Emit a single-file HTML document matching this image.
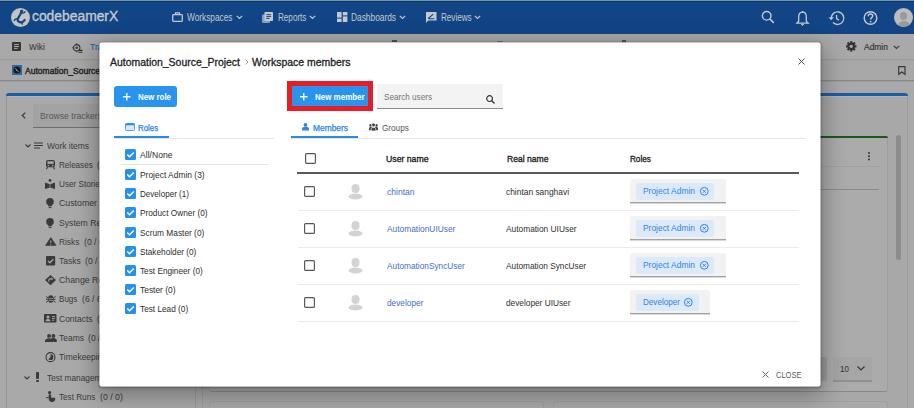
<!DOCTYPE html>
<html><head><meta charset="utf-8">
<style>
*{box-sizing:border-box;margin:0;padding:0}
html,body{width:914px;height:408px;overflow:hidden}
body{position:relative;font-family:"Liberation Sans",sans-serif;background:#a9a9a9;color:#2f2f2f}
.a{position:absolute}
.t{position:absolute;white-space:nowrap;line-height:1;transform-origin:0 0}
svg{position:absolute;overflow:visible}
</style></head><body>
<div class="a" style="left:0px;top:0px;width:914px;height:34px;background:#124586;"></div>
<div class="a" style="left:0px;top:0px;width:914px;height:1px;background:#789896;"></div>
<div class="a" style="left:0px;top:1px;width:914px;height:1px;background:#06357c;"></div>
<div class="a" style="left:11px;top:8px;width:19px;height:19px;border-radius:50%;background:#c3c3bf"></div>
<svg style="left:11px;top:8px;" width="19" height="19" viewBox="0 0 19 19"><path d="M10.6 3.6L9.2 6.5 7 10.4c-.6 1.2-.3 2.5.8 3.3 1.3.9 3 .8 4.3-.1l1.6-1.6" stroke="#124586" stroke-width="2.2" fill="none" stroke-linecap="round"/><path d="M9.8 5.6l3.3-.9.9-1M7.3 10.2l-3.2 1.1-.9 1.2M10.8 14.1l.5 2" stroke="#124586" stroke-width="1.3" fill="none" stroke-linecap="round"/><ellipse cx="10.7" cy="3.1" rx="1.7" ry="1.3" fill="#124586"/></svg>
<div class="t" style="left:31.90px;top:9.45px;font-size:14px;color:#c6c9cc;font-weight:normal;transform:scaleX(0.989);-webkit-text-stroke:.35px #c6c9cc;">codebeamerX</div>
<svg style="left:172px;top:12px;" width="11" height="10" viewBox="0 0 11 10"><rect x=".7" y="2.7" width="9.6" height="6.6" rx=".8" stroke="#c6c9cc" stroke-width="1.3" fill="none"/><path d="M3.5 2.7V.9h4v1.8" stroke="#c6c9cc" stroke-width="1.2" fill="none"/></svg>
<div class="t" style="left:186.90px;top:12.54px;font-size:10px;color:#c6c9cc;font-weight:normal;transform:scaleX(0.830);">Workspaces</div>
<svg style="left:235.5px;top:15.3px;" width="7" height="5" viewBox="0 0 7 5"><path d="M.8 .8L3.5 3.5 6.2 .8" stroke="#c6c9cc" stroke-width="1.2" fill="none"/></svg>
<svg style="left:262px;top:12px;" width="11" height="11" viewBox="0 0 11 11"><rect x="0" y="2.5" width="8" height="8.5" rx=".8" fill="#8c9fb8"/><rect x="2.5" y="0" width="8.5" height="9" rx=".8" fill="#c6c9cc"/><path d="M4.3 2.7h4.8M4.3 4.6h4.8M4.3 6.5h3" stroke="#124586" stroke-width="1"/></svg>
<div class="t" style="left:277.60px;top:12.54px;font-size:10px;color:#c6c9cc;font-weight:normal;transform:scaleX(0.811);">Reports</div>
<svg style="left:309px;top:15.3px;" width="7" height="5" viewBox="0 0 7 5"><path d="M.8 .8L3.5 3.5 6.2 .8" stroke="#c6c9cc" stroke-width="1.2" fill="none"/></svg>
<svg style="left:336.5px;top:12.3px;" width="10.5" height="10" viewBox="0 0 10.5 10"><rect x="0" y="0" width="4.6" height="5.6" fill="#c6c9cc"/><rect x="5.8" y="0" width="4.6" height="3.4" fill="#c6c9cc"/><rect x="0" y="6.6" width="4.6" height="3.4" fill="#c6c9cc"/><rect x="5.8" y="4.4" width="4.6" height="5.6" fill="#c6c9cc"/></svg>
<div class="t" style="left:350.90px;top:12.54px;font-size:10px;color:#c6c9cc;font-weight:normal;transform:scaleX(0.835);">Dashboards</div>
<svg style="left:398.5px;top:15.3px;" width="7" height="5" viewBox="0 0 7 5"><path d="M.8 .8L3.5 3.5 6.2 .8" stroke="#c6c9cc" stroke-width="1.2" fill="none"/></svg>
<svg style="left:426px;top:12px;" width="10.5" height="11" viewBox="0 0 10.5 11"><path d="M0 0h10.5v8.5H2.2L0 11z" fill="#c6c9cc"/><path d="M2.3 6.5l5-4.3M2.3 6.8h6" stroke="#124586" stroke-width="1.1"/></svg>
<div class="t" style="left:440.60px;top:12.54px;font-size:10px;color:#c6c9cc;font-weight:normal;transform:scaleX(0.810);">Reviews</div>
<svg style="left:474px;top:15.3px;" width="7" height="5" viewBox="0 0 7 5"><path d="M.8 .8L3.5 3.5 6.2 .8" stroke="#c6c9cc" stroke-width="1.2" fill="none"/></svg>
<svg style="left:761px;top:10px;" width="14" height="14" viewBox="0 0 14 14"><circle cx="5.7" cy="5.8" r="4.3" stroke="#c6c9cc" stroke-width="1.4" fill="none"/><path d="M8.8 8.9l4 4" stroke="#c6c9cc" stroke-width="1.5"/></svg>
<svg style="left:795.5px;top:10.5px;" width="13" height="15" viewBox="0 0 13 15"><path d="M6.5 1.2c2.6 0 3.8 2 3.8 4.5v4.6l1.8 1.8H.9l1.8-1.8V5.7c0-2.5 1.2-4.5 3.8-4.5z" stroke="#c6c9cc" stroke-width="1.3" fill="none"/><path d="M5.2 13.2h2.6l-1.3 1.3z" fill="#c6c9cc" stroke="#c6c9cc" stroke-width=".8"/><circle cx="6.5" cy="1" r=".9" fill="#c6c9cc"/></svg>
<svg style="left:828px;top:10.5px;" width="16" height="14" viewBox="0 0 16 14"><path d="M3.2 7.5A6.3 6.3 0 1 1 5 11.6" stroke="#c6c9cc" stroke-width="1.4" fill="none"/><path d="M.6 6.3l2.6 3 2.6-3z" fill="#c6c9cc"/><path d="M8.6 4v3.6l2.4 1.6" stroke="#c6c9cc" stroke-width="1.3" fill="none"/></svg>
<svg style="left:862.5px;top:10.5px;" width="15" height="15" viewBox="0 0 15 15"><circle cx="7.5" cy="7" r="6.3" stroke="#c6c9cc" stroke-width="1.4" fill="none"/><path d="M5.3 5.2c0-1.4 1-2.2 2.2-2.2s2.2.8 2.2 2c0 1.6-2.1 1.7-2.1 3.4" stroke="#c6c9cc" stroke-width="1.4" fill="none"/><circle cx="7.6" cy="10.6" r=".9" fill="#c6c9cc"/></svg>
<div class="a" style="left:894px;top:8px;width:19px;height:19px;border-radius:50%;background:#bcbcbc;overflow:hidden"><div class="a" style="left:6px;top:3.5px;width:7px;height:8.5px;border-radius:3.5px;background:#9a9a9a"></div><div class="a" style="left:2.5px;top:12.5px;width:14px;height:9px;border-radius:7px 7px 0 0;background:#9a9a9a"></div></div>
<div class="a" style="left:0px;top:34px;width:914px;height:25px;background:#a9a9a9;"></div>
<div class="a" style="left:0px;top:59px;width:914px;height:1px;background:#9c9c9c;"></div>
<div class="a" style="left:0px;top:60px;width:914px;height:1px;background:#a3a3a3;"></div>
<div class="a" style="left:0px;top:61px;width:914px;height:19px;background:#a8a8a8;"></div>
<div class="a" style="left:0px;top:80px;width:914px;height:1px;background:#8a8a8a;"></div>
<div class="a" style="left:0px;top:81px;width:914px;height:1px;background:#9c9c9c;"></div>
<svg style="left:12px;top:42px;" width="9" height="9" viewBox="0 0 9 9"><rect width="9" height="9" rx="1" fill="#363636"/><path d="M2 2.6h5M2 4.5h5M2 6.4h3.5" stroke="#a9a9a9" stroke-width="1"/></svg>
<div class="t" style="left:29.30px;top:43.08px;font-size:9px;color:#484848;font-weight:normal;transform:scaleX(0.929);-webkit-text-stroke:.2px #484848;">Wiki</div>
<svg style="left:71.5px;top:42.5px;" width="11" height="10" viewBox="0 0 11 10"><circle cx="4.7" cy="4.8" r="3.2" stroke="#333" stroke-width="1.1" fill="none"/><path d="M4.7 .3v1.6M.2 4.8h1.6M4.7 7.7v1.6" stroke="#333" stroke-width="1"/><circle cx="4.7" cy="4.8" r="1.2" fill="#333"/><path d="M6.5 7.4h4M6.5 9.2h4" stroke="#333" stroke-width="1.1"/></svg>
<div class="t" style="left:89.70px;top:43.03px;font-size:9.3px;color:#1b66b4;font-weight:normal;transform:scaleX(0.920);-webkit-text-stroke:.2px #1b66b4;">Tracker</div>
<div class="a" style="left:392px;top:40px;width:5px;height:2px;background:#555;"></div>
<div class="a" style="left:497px;top:41px;width:6px;height:1px;background:#777;"></div>
<div class="a" style="left:622px;top:40px;width:4px;height:2px;background:#555;"></div>
<svg style="left:845.5px;top:41px;" width="11" height="11" viewBox="0 0 11 11"><path d="M8.99 4.25 L10.42 4.19 L10.42 6.51 L8.99 6.45 L8.67 7.22 L9.73 8.19 L8.09 9.83 L7.12 8.77 L6.35 9.09 L6.41 10.52 L4.09 10.52 L4.15 9.09 L3.38 8.77 L2.41 9.83 L0.77 8.19 L1.83 7.22 L1.51 6.45 L0.08 6.51 L0.08 4.19 L1.51 4.25 L1.83 3.48 L0.77 2.51 L2.41 0.87 L3.38 1.93 L4.15 1.61 L4.09 0.18 L6.41 0.18 L6.35 1.61 L7.12 1.93 L8.09 0.87 L9.73 2.51 L8.67 3.48Z" fill="#333"/><circle cx="5.25" cy="5.35" r="1.7" fill="#a9a9a9"/></svg>
<div class="t" style="left:864.00px;top:43.18px;font-size:9px;color:#363636;font-weight:normal;transform:scaleX(0.938);-webkit-text-stroke:.2px #363636;">Admin</div>
<svg style="left:892.8px;top:44.6px;" width="7" height="5" viewBox="0 0 7 5"><path d="M.8 .8L3.5 3.5 6.2 .8" stroke="#3c3c3c" stroke-width="1.2" fill="none"/></svg>
<svg style="left:12px;top:65px;" width="10" height="10" viewBox="0 0 10 10"><rect width="10" height="10" fill="#2a6aa6"/><circle cx="5" cy="5" r="3.6" fill="#1b1b1b"/><path d="M3.2 3.5c1 .4 1.5 1 1.3 2 .8-.2 1.7.2 1.9 1.4" stroke="#aaa" stroke-width=".9" fill="none"/></svg>
<div class="t" style="left:25.00px;top:66.93px;font-size:9.3px;color:#222;font-weight:normal;transform:scaleX(0.920);-webkit-text-stroke:.4px #222;">Automation_Source_Project</div>
<svg style="left:897.5px;top:66px;" width="8" height="9" viewBox="0 0 8 9"><path d="M.7 .7h6.3v7.6L3.85 6 .7 8.3z" stroke="#3a3a3a" stroke-width="1.2" fill="none"/></svg>
<div class="a" style="left:6px;top:93px;width:190px;height:330px;background:#a9a9a9;border-left:1px solid #959595;border-right:1px solid #999;border-radius:3px 3px 0 0"></div>
<div class="a" style="left:6px;top:93px;width:190px;height:3px;background:#1b5ea6;border-radius:3px 3px 0 0"></div>
<div class="a" style="left:7px;top:96px;width:188px;height:1px;background:#b8b4ae;"></div>
<svg style="left:20.5px;top:112px;" width="5" height="7" viewBox="0 0 5 7"><path d="M4.3.6L1.2 3.5l3.1 2.9" stroke="#3a3a3a" stroke-width="1.2" fill="none"/></svg>
<div class="a" style="left:33px;top:104px;width:163px;height:24px;background:#a3a3a3;border-bottom:1px solid #6e6e6e"></div>
<div class="t" style="left:40.30px;top:111.68px;font-size:9px;color:#575757;font-weight:normal;transform:scaleX(0.961);">Browse trackers</div>
<svg style="left:24.5px;top:144px;" width="6" height="4" viewBox="0 0 6 4"><path d="M.5.5L3 3 5.5.5" stroke="#3b3b3b" stroke-width="1.1" fill="none"/></svg>
<svg style="left:34px;top:142px;" width="9" height="7" viewBox="0 0 9 7"><path d="M0 1h9M0 3.5h9M0 6h6" stroke="#3b3b3b" stroke-width="1.1"/></svg>
<div class="t" style="left:46.60px;top:142.48px;font-size:9px;color:#3b3b3b;font-weight:normal;transform:scaleX(0.937);">Work items</div>
<div class="t" style="left:58.60px;top:161.48px;font-size:9px;color:#3b3b3b;font-weight:normal;transform:scaleX(0.898);">Releases</div>
<div class="t" style="left:97.10px;top:161.48px;font-size:9px;color:#3b3b3b;font-weight:normal;transform:scaleX(0.962);">(0 / 0)</div>
<svg style="left:45.5px;top:160.2px;" width="9" height="9.3" viewBox="0 0 9 9.3"><rect x="0" y="0" width="9" height="7.3" rx="2" fill="#3a3a3a"/><rect x="1.4" y="1.3" width="6.2" height="2.6" fill="#a9a9a9"/><circle cx="2.3" cy="5.6" r=".8" fill="#a9a9a9"/><circle cx="6.7" cy="5.6" r=".8" fill="#a9a9a9"/><path d="M1.5 7l-1 2.2M7.5 7l1 2.2" stroke="#3a3a3a" stroke-width="1.1"/></svg>
<div class="t" style="left:58.60px;top:180.48px;font-size:9px;color:#3b3b3b;font-weight:normal;transform:scaleX(0.909);">User Stories</div>
<div class="t" style="left:108.40px;top:180.48px;font-size:9px;color:#3b3b3b;font-weight:normal;transform:scaleX(0.962);">(0 / 0)</div>
<svg style="left:45px;top:178.6px;" width="10" height="10" viewBox="0 0 10 10"><circle cx="5" cy="1.4" r="1.4" fill="#3a3a3a"/><path d="M0 3.6l5 1.6 5-1.6V10L5 8.6 0 10z" fill="#3a3a3a"/><path d="M5 5.2v3.4" stroke="#a9a9a9" stroke-width=".7"/></svg>
<div class="t" style="left:58.60px;top:199.48px;font-size:9px;color:#3b3b3b;font-weight:normal;transform:scaleX(0.974);">Customer Requirements</div>
<div class="t" style="left:58.60px;top:218.88px;font-size:9px;color:#3b3b3b;font-weight:normal;transform:scaleX(0.960);">System Requirements</div>
<svg style="left:46.4px;top:197.7px;" width="8" height="10.5" viewBox="0 0 8 10.5"><circle cx="4" cy="3.8" r="3.8" fill="#3a3a3a"/><path d="M2.2 6.5h3.6v1.8H2.2z" fill="#3a3a3a"/><path d="M2.6 9.6h2.8" stroke="#3a3a3a" stroke-width="1"/></svg>
<svg style="left:46.4px;top:217.6px;" width="8" height="10.5" viewBox="0 0 8 10.5"><circle cx="4" cy="3.8" r="3.8" fill="#3a3a3a"/><path d="M2.2 6.5h3.6v1.8H2.2z" fill="#3a3a3a"/><path d="M2.6 9.6h2.8" stroke="#3a3a3a" stroke-width="1"/></svg>
<div class="t" style="left:58.60px;top:237.98px;font-size:9px;color:#3b3b3b;font-weight:normal;transform:scaleX(0.924);">Risks</div>
<div class="t" style="left:83.70px;top:237.98px;font-size:9px;color:#3b3b3b;font-weight:normal;transform:scaleX(0.962);">(0 / 0)</div>
<svg style="left:44.6px;top:237px;" width="11.6" height="8.8" viewBox="0 0 11.6 8.8"><path d="M5.8 0L11.6 8.8H0z" fill="#3a3a3a"/><path d="M5.8 3.4v2.6M5.8 6.8v1" stroke="#a9a9a9" stroke-width="1"/></svg>
<div class="t" style="left:58.60px;top:257.18px;font-size:9px;color:#3b3b3b;font-weight:normal;transform:scaleX(0.942);">Tasks</div>
<div class="t" style="left:85.10px;top:257.18px;font-size:9px;color:#3b3b3b;font-weight:normal;transform:scaleX(0.962);">(0 / 0)</div>
<svg style="left:45.5px;top:255.8px;" width="9.2" height="9.6" viewBox="0 0 9.2 9.6"><rect width="9.2" height="9.6" rx="1" fill="#3a3a3a"/><path d="M2 4.9l1.9 1.9 3.5-3.6" stroke="#a9a9a9" stroke-width="1.3" fill="none"/></svg>
<div class="t" style="left:58.60px;top:276.48px;font-size:9px;color:#3b3b3b;font-weight:normal;transform:scaleX(0.972);">Change Requests</div>
<svg style="left:44.6px;top:275.1px;" width="11" height="10.2" viewBox="0 0 11 10.2"><path d="M5.5 0l5.5 5.1-5.5 5.1L0 5.1z" fill="#3a3a3a"/><path d="M3.8 6.8V5.2c0-.9.5-1.3 1.3-1.3h2" stroke="#a9a9a9" stroke-width="1.1" fill="none"/><path d="M6.6 2.6l1.6 1.3-1.6 1.3z" fill="#a9a9a9"/></svg>
<div class="t" style="left:58.60px;top:295.48px;font-size:9px;color:#3b3b3b;font-weight:normal;transform:scaleX(0.897);">Bugs</div>
<div class="t" style="left:81.80px;top:295.48px;font-size:9px;color:#3b3b3b;font-weight:normal;transform:scaleX(0.962);">(6 / 6)</div>
<svg style="left:45.5px;top:294px;" width="9.6" height="8.8" viewBox="0 0 9.6 8.8"><ellipse cx="4.8" cy="5" rx="2.9" ry="3.8" fill="#3a3a3a"/><path d="M0 2.5l2 1.3M9.6 2.5l-2 1.3M0 5.3h2M9.6 5.3h-2M0 8.3l2-1.3M9.6 8.3l-2-1.3" stroke="#3a3a3a" stroke-width="1"/><path d="M2.4 4.6h4.8M2.6 6.5h4.4" stroke="#a9a9a9" stroke-width=".7"/></svg>
<div class="t" style="left:58.60px;top:314.78px;font-size:9px;color:#3b3b3b;font-weight:normal;transform:scaleX(0.945);">Contacts</div>
<div class="t" style="left:97.00px;top:314.78px;font-size:9px;color:#3b3b3b;font-weight:normal;transform:scaleX(0.962);">(0 / 0)</div>
<svg style="left:43.8px;top:314.1px;" width="12.5" height="8.6" viewBox="0 0 12.5 8.6"><rect width="12.5" height="8.6" rx="1" fill="#3a3a3a"/><circle cx="4" cy="3" r="1.5" fill="#a9a9a9"/><path d="M1.6 7.2c0-1.4 1-2.2 2.4-2.2s2.4.8 2.4 2.2z" fill="#a9a9a9"/><path d="M8 2.6h3M8 4.4h3M8 6.2h2.2" stroke="#a9a9a9" stroke-width=".9"/></svg>
<div class="t" style="left:58.60px;top:334.38px;font-size:9px;color:#3b3b3b;font-weight:normal;transform:scaleX(0.942);">Teams</div>
<div class="t" style="left:88.40px;top:334.38px;font-size:9px;color:#3b3b3b;font-weight:normal;transform:scaleX(0.962);">(0 / 0)</div>
<svg style="left:44.5px;top:333.7px;" width="11.8" height="8.1" viewBox="0 0 11.8 8.1"><circle cx="4" cy="1.9" r="1.9" fill="#3a3a3a"/><circle cx="8.4" cy="1.9" r="1.9" fill="#3a3a3a"/><path d="M0 8.1V6.7c0-1.6 2-2.5 4-2.5s4 .9 4 2.5v1.4z" fill="#3a3a3a"/><path d="M6 4.3c.8-.2 1.5-.3 2.4-.3 1.8 0 3.4.9 3.4 2.5v1.6H8.6" fill="#3a3a3a"/></svg>
<div class="t" style="left:58.60px;top:353.18px;font-size:9px;color:#3b3b3b;font-weight:normal;transform:scaleX(0.937);">Timekeeping</div>
<svg style="left:44.5px;top:351.6px;" width="11" height="10.3" viewBox="0 0 11 10.3"><circle cx="5.5" cy="5.15" r="4.5" stroke="#3a3a3a" stroke-width="1.1" fill="none"/><path d="M5.5 2.3v2.85L3.3 7.2A3 3 0 0 0 5.5 8 2.85 2.85 0 0 0 5.5 2.3z" fill="#3a3a3a"/></svg>
<svg style="left:24.4px;top:376px;" width="6" height="4" viewBox="0 0 6 4"><path d="M.5.5L3 3 5.5.5" stroke="#3b3b3b" stroke-width="1.1" fill="none"/></svg>
<div class="a" style="left:36.2px;top:372.3px;width:2.5px;height:6.6px;background:#3b3b3b;border-radius:1px"></div>
<div class="a" style="left:36.2px;top:379.8px;width:2.5px;height:2.3px;background:#3b3b3b;border-radius:1px"></div>
<div class="t" style="left:46.50px;top:374.48px;font-size:9px;color:#3b3b3b;font-weight:normal;transform:scaleX(0.922);">Test management</div>
<svg style="left:45.7px;top:391.3px;" width="9.2" height="11" viewBox="0 0 9.2 11"><circle cx="3.6" cy="1.6" r="1.6" fill="#3a3a3a"/><path d="M2.7 3.4v4.4c0 2 1.2 3.2 3.3 3.2S9.2 9.9 9.2 8.3V6.8H5.2V3.4z" fill="#3a3a3a"/><path d="M0 6.6h2.7" stroke="#3a3a3a" stroke-width="1"/></svg>
<div class="t" style="left:59.20px;top:393.18px;font-size:9px;color:#3b3b3b;font-weight:normal;transform:scaleX(0.906);">Test Runs</div>
<div class="t" style="left:99.60px;top:393.18px;font-size:9px;color:#3b3b3b;font-weight:normal;transform:scaleX(0.971);">(0 / 0)</div>
<div class="a" style="left:200px;top:93px;width:708px;height:330px;background:#a8a8a8;border-right:1px solid #9c9c9c;border-radius:3px 3px 0 0"></div>
<div class="a" style="left:200px;top:93px;width:708px;height:3px;background:#1b5ea6;border-radius:0 3px 0 0"></div>
<div class="a" style="left:200px;top:96px;width:707px;height:1px;background:#b8b4ae;"></div>
<div class="a" style="left:209px;top:136px;width:679px;height:256px;background:#ababab;border-left:1px solid #9e9e9e;border-right:1px solid #9e9e9e;border-bottom:1px solid #8a8a8a;border-radius:3px"></div>
<div class="a" style="left:209px;top:136px;width:679px;height:2px;background:#1f561f;border-radius:0 3px 0 0"></div>
<svg style="left:867.5px;top:151.5px;" width="2" height="9" viewBox="0 0 2 9"><circle cx="1" cy="1" r="1" fill="#333"/><circle cx="1" cy="4.3" r="1" fill="#333"/><circle cx="1" cy="7.6" r="1" fill="#333"/></svg>
<div class="a" style="left:209px;top:166px;width:670px;height:1px;background:#a0a0a0;"></div>
<div class="a" style="left:209px;top:189px;width:670px;height:1px;background:#8a8a8a;"></div>
<div class="a" style="left:800px;top:357px;width:27px;height:24px;background:#9b9b9b;border-radius:3px"></div>
<div class="a" style="left:833px;top:357px;width:39px;height:25px;background:#a6a6a6;border-bottom:2px solid #909090;border-radius:2px 2px 0 0"></div>
<div class="t" style="left:840.10px;top:363.97px;font-size:9.6px;color:#333;font-weight:normal;transform:scaleX(0.826);">10</div>
<svg style="left:857px;top:366px;" width="8" height="5" viewBox="0 0 8 5"><path d="M.5.5L4 4 7.5.5" stroke="#333" stroke-width="1.1" fill="none"/></svg>
<div class="a" style="left:209px;top:401px;width:335px;height:20px;background:#a9a9a9;border:1px solid #9e9e9e;border-radius:3px"></div>
<div class="a" style="left:553px;top:401px;width:335px;height:20px;background:#a9a9a9;border:1px solid #9e9e9e;border-radius:3px"></div>
<div class="a" style="left:896px;top:135px;width:5px;height:125px;background:#8c8c8c;border-radius:3px"></div>
<div class="a" style="left:195px;top:93px;width:1px;height:315px;background:#9a9a9a;"></div>
<div class="a" style="left:202px;top:93px;width:1px;height:315px;background:#9c9c9c;"></div>
<div class="a" style="left:99px;top:42px;width:721px;height:344px;background:transparent;border-radius:2px;transform:translate(.5px,.4px);box-shadow:0 0 0 1px rgba(0,0,0,.1),0 1px 3px rgba(0,0,0,.25),0 6px 24px 2px rgba(0,0,0,.33)"></div>
<div class="a" style="left:99px;top:42px;width:721px;height:344px;background:#fff;border-radius:2px;transform:translate(.5px,.4px)"></div>
<div class="t" style="left:110.30px;top:57.39px;font-size:11px;color:#1c1c1c;font-weight:normal;transform:scaleX(0.949);-webkit-text-stroke:.3px #1c1c1c;">Automation_Source_Project</div>
<svg style="left:244.5px;top:58.5px;" width="4" height="6" viewBox="0 0 4 6"><path d="M.6.6L3 3 .6 5.4" stroke="#999" stroke-width="1" fill="none"/></svg>
<div class="t" style="left:252.00px;top:57.39px;font-size:11px;color:#1c1c1c;font-weight:normal;transform:scaleX(0.950);-webkit-text-stroke:.3px #1c1c1c;">Workspace members</div>
<svg style="left:798px;top:58px;" width="7" height="7" viewBox="0 0 7 7"><path d="M.5.5l6 6M6.5.5l-6 6" stroke="#555" stroke-width="1"/></svg>
<div class="a" style="left:114px;top:86px;width:63px;height:21px;background:#2794ee;border-radius:3px"></div>
<svg style="left:122.8px;top:93px;" width="7.5" height="7.5" viewBox="0 0 7.5 7.5"><path d="M3.75 0v7.5M0 3.75h7.5" stroke="#fff" stroke-width="1.3"/></svg>
<div class="t" style="left:137.60px;top:93.28px;font-size:9px;color:#fff;font-weight:bold;transform:scaleX(0.879);">New role</div>
<svg style="left:124.5px;top:123px;" width="10" height="8" viewBox="0 0 10 8"><rect x=".5" y=".5" width="9" height="7" rx="1" stroke="#4a9af0" stroke-width="1" fill="#dcecfc"/><rect x=".5" y=".5" width="9" height="1.8" fill="#2b8ae6"/></svg>
<div class="t" style="left:138.00px;top:123.98px;font-size:9px;color:#2585e4;font-weight:normal;transform:scaleX(0.877);-webkit-text-stroke:.25px #2585e4;">Roles</div>
<div class="a" style="left:114px;top:138px;width:160px;height:1px;background:#e6e6e6;"></div>
<div class="a" style="left:114px;top:136px;width:55px;height:2px;background:#2b8ae6;"></div>
<svg style="left:124.5px;top:149px;" width="11" height="11" viewBox="0 0 11 11"><rect width="11" height="11" rx="1.5" fill="#2690ee"/><path d="M2.3 5.6l2.2 2.2 4.3-4.4" stroke="#fff" stroke-width="1.4" fill="none"/></svg>
<div class="t" style="left:140.00px;top:151.08px;font-size:9px;color:#2e2e2e;font-weight:normal;transform:scaleX(0.955);">All/None</div>
<div class="a" style="left:121px;top:164px;width:147px;height:1px;background:#e4e4e4;"></div>
<svg style="left:124.5px;top:169px;" width="11" height="11" viewBox="0 0 11 11"><rect width="11" height="11" rx="1.5" fill="#2690ee"/><path d="M2.3 5.6l2.2 2.2 4.3-4.4" stroke="#fff" stroke-width="1.4" fill="none"/></svg>
<div class="t" style="left:140.00px;top:170.88px;font-size:9px;color:#2e2e2e;font-weight:normal;transform:scaleX(0.937);">Project Admin (3)</div>
<svg style="left:124.5px;top:188px;" width="11" height="11" viewBox="0 0 11 11"><rect width="11" height="11" rx="1.5" fill="#2690ee"/><path d="M2.3 5.6l2.2 2.2 4.3-4.4" stroke="#fff" stroke-width="1.4" fill="none"/></svg>
<div class="t" style="left:140.00px;top:190.08px;font-size:9px;color:#2e2e2e;font-weight:normal;transform:scaleX(0.898);">Developer (1)</div>
<svg style="left:124.5px;top:207px;" width="11" height="11" viewBox="0 0 11 11"><rect width="11" height="11" rx="1.5" fill="#2690ee"/><path d="M2.3 5.6l2.2 2.2 4.3-4.4" stroke="#fff" stroke-width="1.4" fill="none"/></svg>
<div class="t" style="left:140.00px;top:209.38px;font-size:9px;color:#2e2e2e;font-weight:normal;transform:scaleX(0.919);">Product Owner (0)</div>
<svg style="left:124.5px;top:227px;" width="11" height="11" viewBox="0 0 11 11"><rect width="11" height="11" rx="1.5" fill="#2690ee"/><path d="M2.3 5.6l2.2 2.2 4.3-4.4" stroke="#fff" stroke-width="1.4" fill="none"/></svg>
<div class="t" style="left:140.00px;top:228.58px;font-size:9px;color:#2e2e2e;font-weight:normal;transform:scaleX(0.925);">Scrum Master (0)</div>
<svg style="left:124.5px;top:246px;" width="11" height="11" viewBox="0 0 11 11"><rect width="11" height="11" rx="1.5" fill="#2690ee"/><path d="M2.3 5.6l2.2 2.2 4.3-4.4" stroke="#fff" stroke-width="1.4" fill="none"/></svg>
<div class="t" style="left:140.00px;top:247.78px;font-size:9px;color:#2e2e2e;font-weight:normal;transform:scaleX(0.916);">Stakeholder (0)</div>
<svg style="left:124.5px;top:265px;" width="11" height="11" viewBox="0 0 11 11"><rect width="11" height="11" rx="1.5" fill="#2690ee"/><path d="M2.3 5.6l2.2 2.2 4.3-4.4" stroke="#fff" stroke-width="1.4" fill="none"/></svg>
<div class="t" style="left:140.00px;top:266.98px;font-size:9px;color:#2e2e2e;font-weight:normal;transform:scaleX(0.915);">Test Engineer (0)</div>
<svg style="left:124.5px;top:284px;" width="11" height="11" viewBox="0 0 11 11"><rect width="11" height="11" rx="1.5" fill="#2690ee"/><path d="M2.3 5.6l2.2 2.2 4.3-4.4" stroke="#fff" stroke-width="1.4" fill="none"/></svg>
<div class="t" style="left:140.00px;top:286.18px;font-size:9px;color:#2e2e2e;font-weight:normal;transform:scaleX(0.935);">Tester (0)</div>
<svg style="left:124.5px;top:303px;" width="11" height="11" viewBox="0 0 11 11"><rect width="11" height="11" rx="1.5" fill="#2690ee"/><path d="M2.3 5.6l2.2 2.2 4.3-4.4" stroke="#fff" stroke-width="1.4" fill="none"/></svg>
<div class="t" style="left:140.00px;top:305.38px;font-size:9px;color:#2e2e2e;font-weight:normal;transform:scaleX(0.917);">Test Lead (0)</div>
<div class="a" style="left:287px;top:81px;width:86px;height:30px;background:#e81c24;"></div>
<div class="a" style="left:292px;top:86px;width:76px;height:20px;background:#2794ee;"></div>
<svg style="left:300.2px;top:92.8px;" width="7.5" height="7.5" viewBox="0 0 7.5 7.5"><path d="M3.75 0v7.5M0 3.75h7.5" stroke="#fff" stroke-width="1.3"/></svg>
<div class="t" style="left:314.90px;top:93.08px;font-size:9px;color:#fff;font-weight:bold;transform:scaleX(0.886);">New member</div>
<div class="a" style="left:377px;top:84px;width:126px;height:25px;background:#f3f3f3;border-bottom:1px solid #8c8c8c;border-radius:2px 2px 0 0"></div>
<div class="t" style="left:383.50px;top:91.90px;font-size:9.8px;color:#737373;font-weight:normal;transform:scaleX(0.832);">Search users</div>
<svg style="left:486px;top:94.5px;" width="9" height="9" viewBox="0 0 9 9"><circle cx="3.6" cy="3.6" r="2.9" stroke="#333" stroke-width="1.2" fill="none"/><path d="M5.7 5.7l2.8 2.8" stroke="#333" stroke-width="1.3"/></svg>
<svg style="left:301.5px;top:123.3px;" width="7" height="7.5" viewBox="0 0 7 7.5"><circle cx="3.5" cy="1.9" r="1.9" fill="#2a88e4"/><path d="M0 7.5V6c0-1.4 1.2-2.3 3.5-2.3S7 4.6 7 6v1.5z" fill="#2a88e4"/></svg>
<div class="t" style="left:312.70px;top:123.58px;font-size:9px;color:#2585e4;font-weight:normal;transform:scaleX(0.933);-webkit-text-stroke:.25px #2585e4;">Members</div>
<svg style="left:369px;top:123px;" width="9" height="8" viewBox="0 0 9 8"><circle cx="1.6" cy="2.4" r="1.3" fill="#444"/><circle cx="7.4" cy="2.4" r="1.3" fill="#444"/><path d="M0 7.2V5.6c0-.9.6-1.5 1.6-1.5s1.6.6 1.6 1.5v1.6zM5.8 7.2V5.6c0-.9.6-1.5 1.6-1.5S9 4.7 9 5.6v1.6z" fill="#444"/><circle cx="4.5" cy="1.9" r="1.9" stroke="#fff" stroke-width=".7" fill="#444"/><path d="M2.2 8V6.4c0-1.3 1-2.1 2.3-2.1s2.3.8 2.3 2.1V8z" stroke="#fff" stroke-width=".7" fill="#444"/></svg>
<div class="t" style="left:382.00px;top:123.58px;font-size:9px;color:#545454;font-weight:normal;transform:scaleX(0.908);">Groups</div>
<div class="a" style="left:291px;top:138px;width:514px;height:1px;background:#e6e6e6;"></div>
<div class="a" style="left:291px;top:136px;width:67px;height:2px;background:#2b8ae6;"></div>
<svg style="left:304.5px;top:153px;" width="11" height="11" viewBox="0 0 11 11"><rect x=".6" y=".6" width="9.8" height="9.8" rx="1" stroke="#555" stroke-width="1.15" fill="#fff"/></svg>
<div class="t" style="left:386.40px;top:155.08px;font-size:9px;color:#1f1f1f;font-weight:normal;transform:scaleX(0.966);-webkit-text-stroke:.35px #1f1f1f;">User name</div>
<div class="t" style="left:507.00px;top:155.08px;font-size:9px;color:#1f1f1f;font-weight:normal;transform:scaleX(0.953);-webkit-text-stroke:.35px #1f1f1f;">Real name</div>
<div class="t" style="left:629.80px;top:155.08px;font-size:9px;color:#1f1f1f;font-weight:normal;transform:scaleX(0.903);-webkit-text-stroke:.35px #1f1f1f;">Roles</div>
<div class="a" style="left:297px;top:172px;width:502px;height:2px;background:#5a5a5a;"></div>
<svg style="left:304px;top:186px;" width="11" height="11" viewBox="0 0 11 11"><rect x=".6" y=".6" width="9.8" height="9.8" rx="1" stroke="#555" stroke-width="1.15" fill="#fff"/></svg>
<svg style="left:347.5px;top:183.8px;" width="15" height="15" viewBox="0 0 15 15"><rect x="3.5" y="0" width="8" height="9" rx="4" fill="#d3d3d3"/><ellipse cx="7.5" cy="12.5" rx="7" ry="3" fill="#d3d3d3"/></svg>
<div class="t" style="left:386.70px;top:187.78px;font-size:9px;color:#3f6fbf;font-weight:normal;transform:scaleX(0.949);">chintan</div>
<div class="t" style="left:506.40px;top:187.78px;font-size:9px;color:#2f2f2f;font-weight:normal;transform:scaleX(0.933);">chintan sanghavi</div>
<div class="a" style="left:629.5px;top:179px;width:96px;height:24px;background:#f2f2f2;border-bottom:1px solid #a2a2a2;box-shadow:0 1px 0 #d8d8d8;border-radius:2px 2px 0 0"></div>
<div class="a" style="left:636px;top:183px;width:78px;height:16.5px;background:#dbe9f8;border-radius:3px"></div>
<div class="t" style="left:643.00px;top:186.83px;font-size:9.3px;color:#2f86e2;font-weight:normal;transform:scaleX(0.906);">Project Admin</div>
<svg style="left:699.5px;top:186.8px;" width="9" height="9" viewBox="0 0 9 9"><circle cx="4.3" cy="4.3" r="3.9" stroke="#2f86e2" stroke-width="1" fill="none"/><path d="M2.8 2.8l3 3M5.8 2.8l-3 3" stroke="#2f86e2" stroke-width=".95"/></svg>
<div class="a" style="left:298px;top:210px;width:501px;height:1px;background:#ebebeb;"></div>
<svg style="left:304px;top:223px;" width="11" height="11" viewBox="0 0 11 11"><rect x=".6" y=".6" width="9.8" height="9.8" rx="1" stroke="#555" stroke-width="1.15" fill="#fff"/></svg>
<svg style="left:347.5px;top:220.8px;" width="15" height="15" viewBox="0 0 15 15"><rect x="3.5" y="0" width="8" height="9" rx="4" fill="#d3d3d3"/><ellipse cx="7.5" cy="12.5" rx="7" ry="3" fill="#d3d3d3"/></svg>
<div class="t" style="left:386.70px;top:224.78px;font-size:9px;color:#3f6fbf;font-weight:normal;transform:scaleX(0.930);">AutomationUIUser</div>
<div class="t" style="left:506.40px;top:224.78px;font-size:9px;color:#2f2f2f;font-weight:normal;transform:scaleX(0.928);">Automation UIUser</div>
<div class="a" style="left:629.5px;top:216px;width:96px;height:24px;background:#f2f2f2;border-bottom:1px solid #a2a2a2;box-shadow:0 1px 0 #d8d8d8;border-radius:2px 2px 0 0"></div>
<div class="a" style="left:636px;top:220px;width:78px;height:16.5px;background:#dbe9f8;border-radius:3px"></div>
<div class="t" style="left:643.00px;top:223.83px;font-size:9.3px;color:#2f86e2;font-weight:normal;transform:scaleX(0.906);">Project Admin</div>
<svg style="left:699.5px;top:223.8px;" width="9" height="9" viewBox="0 0 9 9"><circle cx="4.3" cy="4.3" r="3.9" stroke="#2f86e2" stroke-width="1" fill="none"/><path d="M2.8 2.8l3 3M5.8 2.8l-3 3" stroke="#2f86e2" stroke-width=".95"/></svg>
<div class="a" style="left:298px;top:247px;width:501px;height:1px;background:#ebebeb;"></div>
<svg style="left:304px;top:260px;" width="11" height="11" viewBox="0 0 11 11"><rect x=".6" y=".6" width="9.8" height="9.8" rx="1" stroke="#555" stroke-width="1.15" fill="#fff"/></svg>
<svg style="left:347.5px;top:257.8px;" width="15" height="15" viewBox="0 0 15 15"><rect x="3.5" y="0" width="8" height="9" rx="4" fill="#d3d3d3"/><ellipse cx="7.5" cy="12.5" rx="7" ry="3" fill="#d3d3d3"/></svg>
<div class="t" style="left:386.70px;top:261.78px;font-size:9px;color:#3f6fbf;font-weight:normal;transform:scaleX(0.920);">AutomationSyncUser</div>
<div class="t" style="left:506.40px;top:261.78px;font-size:9px;color:#2f2f2f;font-weight:normal;transform:scaleX(0.920);">Automation SyncUser</div>
<div class="a" style="left:629.5px;top:253px;width:96px;height:24px;background:#f2f2f2;border-bottom:1px solid #a2a2a2;box-shadow:0 1px 0 #d8d8d8;border-radius:2px 2px 0 0"></div>
<div class="a" style="left:636px;top:257px;width:78px;height:16.5px;background:#dbe9f8;border-radius:3px"></div>
<div class="t" style="left:643.00px;top:260.83px;font-size:9.3px;color:#2f86e2;font-weight:normal;transform:scaleX(0.906);">Project Admin</div>
<svg style="left:699.5px;top:260.8px;" width="9" height="9" viewBox="0 0 9 9"><circle cx="4.3" cy="4.3" r="3.9" stroke="#2f86e2" stroke-width="1" fill="none"/><path d="M2.8 2.8l3 3M5.8 2.8l-3 3" stroke="#2f86e2" stroke-width=".95"/></svg>
<div class="a" style="left:298px;top:284px;width:501px;height:1px;background:#ebebeb;"></div>
<svg style="left:304px;top:297px;" width="11" height="11" viewBox="0 0 11 11"><rect x=".6" y=".6" width="9.8" height="9.8" rx="1" stroke="#555" stroke-width="1.15" fill="#fff"/></svg>
<svg style="left:347.5px;top:294.8px;" width="15" height="15" viewBox="0 0 15 15"><rect x="3.5" y="0" width="8" height="9" rx="4" fill="#d3d3d3"/><ellipse cx="7.5" cy="12.5" rx="7" ry="3" fill="#d3d3d3"/></svg>
<div class="t" style="left:386.70px;top:298.78px;font-size:9px;color:#3f6fbf;font-weight:normal;transform:scaleX(0.920);">developer</div>
<div class="t" style="left:506.40px;top:298.78px;font-size:9px;color:#2f2f2f;font-weight:normal;transform:scaleX(0.920);">developer UIUser</div>
<div class="a" style="left:629.5px;top:290px;width:80px;height:24px;background:#f2f2f2;border-bottom:1px solid #a2a2a2;box-shadow:0 1px 0 #d8d8d8;border-radius:2px 2px 0 0"></div>
<div class="a" style="left:636px;top:294px;width:62.5px;height:16.5px;background:#dbe9f8;border-radius:3px"></div>
<div class="t" style="left:643.00px;top:297.83px;font-size:9.3px;color:#2f86e2;font-weight:normal;transform:scaleX(0.872);">Developer</div>
<svg style="left:684px;top:297.8px;" width="9" height="9" viewBox="0 0 9 9"><circle cx="4.3" cy="4.3" r="3.9" stroke="#2f86e2" stroke-width="1" fill="none"/><path d="M2.8 2.8l3 3M5.8 2.8l-3 3" stroke="#2f86e2" stroke-width=".95"/></svg>
<div class="a" style="left:298px;top:321px;width:501px;height:1px;background:#ebebeb;"></div>
<svg style="left:762px;top:371px;" width="7" height="7" viewBox="0 0 7 7"><path d="M.5.5l6 6M6.5.5l-6 6" stroke="#666" stroke-width="1"/></svg>
<div class="t" style="left:775.90px;top:370.00px;font-size:9.8px;color:#5a5a5a;font-weight:normal;transform:scaleX(0.765);">CLOSE</div>
</body></html>
